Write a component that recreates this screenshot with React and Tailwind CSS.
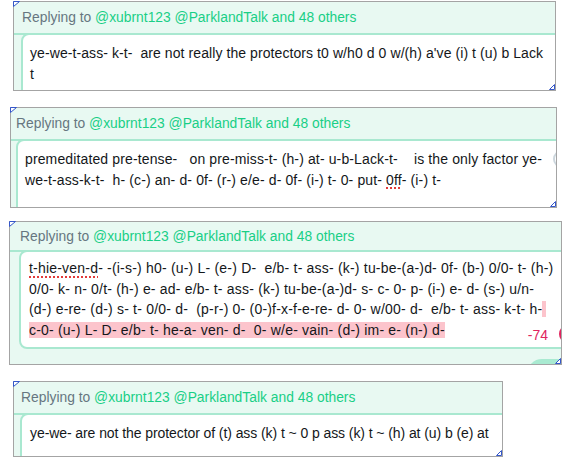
import React from 'react';

const CornerMark = () => (
  <svg className="absolute left-0 top-0" width="7" height="6" viewBox="0 0 7 6">
    <path d="M0.5 5.5 V0.5 H6.5 Z" fill="#fff" stroke="#3557c9" strokeWidth="1" />
  </svg>
);

const ResizeMark = () => (
  <svg className="absolute right-[1px] bottom-[1px]" width="6" height="6" viewBox="0 0 6 6">
    <path d="M0.5 5.5 L5.5 0.5 V5.5 Z" fill="#fff" stroke="#3557c9" strokeWidth="1" />
  </svg>
);

const Spell = ({ children }) => (
  <span className="underline decoration-dotted decoration-2 decoration-[#e23a3a] underline-offset-[3px]">{children}</span>
);

const Panel = ({ className, headerClass, boxClass, lines, overlay, footer }) => (
  <div className={`relative ${className}`}>
    <div className="relative h-full overflow-hidden border border-[#a4a4a4] bg-[#e8f9f2]">
      <div className={`flex items-center border-b-2 border-[#a9e8d0] whitespace-pre text-[13.85px] ${headerClass}`}>
        <span className="text-[#667680]">Replying to </span>
        <span className="text-[#19cf86]">@xubrnt123 @ParklandTalk and 48 others</span>
      </div>
      <div className={`-mt-[2px] w-[640px] rounded-lg border-2 border-[#a9e8d0] bg-white text-[#14171a] leading-[20.5px] ${boxClass}`}>
        {lines.map((line, i) => (
          <div key={i} className="whitespace-pre">{line}</div>
        ))}
      </div>
      {footer}
      {overlay}
    </div>
    <CornerMark />
    <ResizeMark />
  </div>
);

export default function App() {
  return (
    <div className="min-h-screen w-[573px] bg-white pt-px text-[14px] font-['Liberation_Sans',Arial,sans-serif]">
      <Panel
        className="ml-[13px] h-[90px] w-[543px]"
        headerClass="h-[33px] pl-[8px]"
        boxClass="ml-[7px] h-[120px] pl-[7px] pt-[8px] tracking-[0.08px]"
        lines={[
          "ye-we-t-ass- k-t-  are not really the protectors t0 w/h0 d 0 w/(h) a've (i) t (u) b Lack",
          't',
        ]}
      />

      <Panel
        className="ml-[10px] mt-[16px] h-[101px] w-[547px]"
        headerClass="h-[33px] pl-[5px]"
        boxClass="ml-[5px] h-[120px] pl-[7px] pt-[8px] tracking-[0.13px]"
        lines={[
          'premeditated pre-tense-   on pre-miss-t- (h-) at- u-b-Lack-t-    is the only factor ye-',
          <>
            we-t-ass-k-t-  h- (c-) an- d- 0f- (r-) e/e- d- 0f- (i-) t- 0- put- <Spell>0ff</Spell>- (i-) t-
          </>,
        ]}
        overlay={
          <div className="absolute left-[542px] top-[42px] h-[18px] w-[18px] rounded-full border-2 border-[#ccd6dd]" />
        }
      />

      <Panel
        className="ml-[9px] mt-[13px] h-[144px] w-[553px]"
        headerClass="h-[30px] pl-[10px]"
        boxClass="ml-[9px] pl-[8px] pt-[6px] pb-[7px] tracking-[0.2px]"
        lines={[
          <>
            <Spell>t-hie-ven-d</Spell>- -(i-s-) h0- (u-) L- (e-) D-  e/b- t- ass- (k-) tu-be-(a-)d- 0f- (b-) 0/0- t- (h-)
          </>,
          '0/0- k- n- 0/t- (h-) e- ad- e/b- t- ass- (k-) tu-be-(a-)d- s- c- 0- p- (i-) e- d- (s-) u/n-',
          <>
            (d-) e-re- (d-) s- t- 0/0- d-  (p-r-) 0- (0-)f-x-f-e-re- d- 0- w/00- d-  e/b- t- ass- k-t- h-
            <span className="bg-[#fcc4cc]"> </span>
          </>,
          <span className="bg-[#fcc4cc]">c-0- (u-) L- D- e/b- t- he-a- ven- d-  0- w/e- vain- (d-) im- e- (n-) d-</span>,
        ]}
        footer={
          <div className="flex justify-end pt-[10px]">
            <div className="-mr-[30px] h-[30px] w-[64px] shrink-0 rounded-full bg-[#a9ead1]" />
          </div>
        }
        overlay={
          <>
            <span className="absolute right-[13px] top-[103px] leading-[20px] text-[#e0245e]">-74</span>
            <div className="absolute left-[549px] top-[103px] h-[18px] w-[18px] rounded-full border-2 border-[#e0245e]" />
          </>
        }
      />

      <Panel
        className="ml-[13px] mt-[16px] h-[76px] w-[490px]"
        headerClass="h-[33px] pl-[7px]"
        boxClass="ml-[6px] h-[120px] pl-[8px] pt-[8px] tracking-[-0.08px]"
        lines={['ye-we- are not the protector of (t) ass (k) t ~ 0 p ass (k) t ~ (h) at (u) b (e) at']}
      />
    </div>
  );
}
